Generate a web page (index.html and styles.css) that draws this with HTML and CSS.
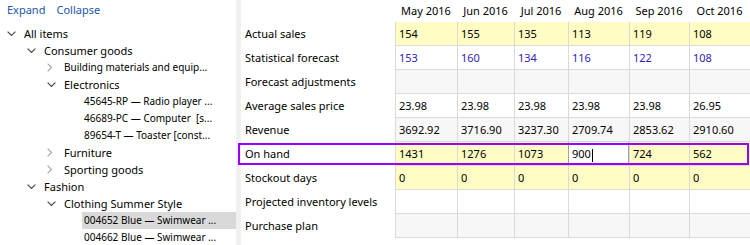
FILE: index.html
```html
<!DOCTYPE html>
<html>
<head>
    <title>Demand plan</title>
    <link rel="stylesheet" href="styles.css">
</head>
<body>
<div class="app">
    <div class="side">
        <div class="tools"><a href="#">Expand</a><a href="#">Collapse</a></div>
        <div class="tree">
            <div class="node l0"><i class="tw"><svg width="9" height="6" viewBox="0 0 9 6"><path class="dn" d="M0.6 0.6 L4.5 4.5 L8.4 0.6"/></svg></i><span class="txt">All items</span></div>
            <div class="node l1"><i class="tw"><svg width="9" height="6" viewBox="0 0 9 6"><path class="dn" d="M0.6 0.6 L4.5 4.5 L8.4 0.6"/></svg></i><span class="txt">Consumer goods</span></div>
            <div class="node l2"><i class="tw"><svg width="6" height="9" viewBox="0 0 6 9"><path class="rt" d="M0.6 0.6 L4.5 4.5 L0.6 8.4"/></svg></i><span class="txt sm">Building materials and equip...</span></div>
            <div class="node l2"><i class="tw"><svg width="9" height="6" viewBox="0 0 9 6"><path class="dn" d="M0.6 0.6 L4.5 4.5 L8.4 0.6"/></svg></i><span class="txt">Electronics</span></div>
            <div class="node l3"><i class="tw"></i><span class="txt sm">45645-RP — Radio player ...</span></div>
            <div class="node l3"><i class="tw"></i><span class="txt sm">46689-PC — Computer &nbsp;[s...</span></div>
            <div class="node l3"><i class="tw"></i><span class="txt sm">89654-T — Toaster [const...</span></div>
            <div class="node l2"><i class="tw"><svg width="6" height="9" viewBox="0 0 6 9"><path class="rt" d="M0.6 0.6 L4.5 4.5 L0.6 8.4"/></svg></i><span class="txt">Furniture</span></div>
            <div class="node l2"><i class="tw"><svg width="6" height="9" viewBox="0 0 6 9"><path class="rt" d="M0.6 0.6 L4.5 4.5 L0.6 8.4"/></svg></i><span class="txt">Sporting goods</span></div>
            <div class="node l1"><i class="tw"><svg width="9" height="6" viewBox="0 0 9 6"><path class="dn" d="M0.6 0.6 L4.5 4.5 L8.4 0.6"/></svg></i><span class="txt">Fashion</span></div>
            <div class="node l2"><i class="tw"><svg width="9" height="6" viewBox="0 0 9 6"><path class="dn" d="M0.6 0.6 L4.5 4.5 L8.4 0.6"/></svg></i><span class="txt">Clothing Summer Style</span></div>
            <div class="node l3 sel"><i class="tw"></i><span class="txt sm">004652 Blue — Swimwear ...</span></div>
            <div class="node l3"><i class="tw"></i><span class="txt sm">004662 Blue — Swimwear ...</span></div>
        </div>
    </div>
    <div class="split"></div>
    <div class="grid">
        <div class="row head">
            <div class="lbl"></div>
            <div class="c">May 2016</div><div class="c">Jun 2016</div><div class="c">Jul 2016</div>
            <div class="c">Aug 2016</div><div class="c">Sep 2016</div><div class="c">Oct 2016</div>
        </div>
        <div class="row yellow">
            <div class="lbl">Actual sales</div>
            <div class="c">154</div><div class="c">155</div><div class="c">135</div>
            <div class="c">113</div><div class="c">119</div><div class="c">108</div>
        </div>
        <div class="row blue">
            <div class="lbl">Statistical forecast</div>
            <div class="c">153</div><div class="c">160</div><div class="c">134</div>
            <div class="c">116</div><div class="c">122</div><div class="c">108</div>
        </div>
        <div class="row gray">
            <div class="lbl">Forecast adjustments</div>
            <div class="c"></div><div class="c"></div><div class="c"></div>
            <div class="c"></div><div class="c"></div><div class="c"></div>
        </div>
        <div class="row">
            <div class="lbl">Average sales price</div>
            <div class="c">23.98</div><div class="c">23.98</div><div class="c">23.98</div>
            <div class="c">23.98</div><div class="c">23.98</div><div class="c">26.95</div>
        </div>
        <div class="row gray">
            <div class="lbl">Revenue</div>
            <div class="c">3692.92</div><div class="c">3716.90</div><div class="c">3237.30</div>
            <div class="c">2709.74</div><div class="c">2853.62</div><div class="c">2910.60</div>
        </div>
        <div class="row yellow focus">
            <div class="lbl">On hand</div>
            <div class="c">1431</div><div class="c">1276</div><div class="c">1073</div>
            <div class="c edit">900<span class="caret"></span></div><div class="c">724</div><div class="c">562</div>
        </div>
        <div class="row yellow">
            <div class="lbl">Stockout days</div>
            <div class="c">0</div><div class="c">0</div><div class="c">0</div>
            <div class="c">0</div><div class="c">0</div><div class="c">0</div>
        </div>
        <div class="row">
            <div class="lbl">Projected inventory levels</div>
            <div class="c"></div><div class="c"></div><div class="c"></div>
            <div class="c"></div><div class="c"></div><div class="c"></div>
        </div>
        <div class="row gray">
            <div class="lbl">Purchase plan</div>
            <div class="c"></div><div class="c"></div><div class="c"></div>
            <div class="c"></div><div class="c"></div><div class="c"></div>
        </div>
    </div>
</div>
</body>
</html>
```
FILE: styles.css
```css
body {
    margin: 0;
    font-family: "Noto Sans", "Open Sans", sans-serif;
    font-size: 11px;
    color: #000;
    background: #fff;
}
.app {
    display: flex;
    height: 245px;
    overflow: hidden;
}

/* left tree */
.side {
    width: 236px;
    flex: none;
    overflow: hidden;
}
.tools {
    display: flex;
    gap: 11px;
    padding-left: 7px;
    height: 20px;
    line-height: 20px;
    margin-bottom: 5px;
}
.tools a {
    color: #2255aa;
    text-decoration: none;
}
.node {
    display: flex;
    align-items: center;
    height: 17px;
    white-space: nowrap;
}
.node.l0 { padding-left: 4px; }
.node.l1 { padding-left: 24px; }
.node.l2 { padding-left: 44px; }
.node.l3 { padding-left: 64px; }
.tw {
    width: 15px;
    padding-left: 3px;
    flex: none;
    display: flex;
    align-items: center;
}
.tw svg { display: block; }
.dn, .rt {
    fill: none;
    stroke-width: 1.2;
}
.dn { stroke: #4a4a4a; }
.rt { stroke: #a8a8a8; }
.txt {
    flex: 1;
    height: 17px;
    line-height: 17px;
    padding: 0 2px;
}
.txt.sm { font-size: 10px; }
.sel .txt { background: #d9d9d9; }

.split {
    width: 5px;
    flex: none;
    background: #f0f0f0;
}

/* right grid */
.grid {
    flex: 1;
}
.row {
    display: flex;
    height: 24px;
    position: relative;
}
.row.head { height: 22px; }
.lbl {
    width: 154px;
    flex: none;
    box-sizing: border-box;
    padding-left: 4px;
    line-height: 23px;
    white-space: nowrap;
    background: #fff;
}
.c {
    flex: none;
    box-sizing: border-box;
    padding-left: 3px;
    line-height: 23px;
    border-left: 1px solid #dadada;
    border-bottom: 1px solid #dadada;
    white-space: nowrap;
}
.c:nth-child(2) { width: 62px; }
.c:nth-child(3) { width: 57px; }
.c:nth-child(4) { width: 54px; }
.c:nth-child(5) { width: 61px; }
.c:nth-child(6) { width: 60px; }
.c:nth-child(7) { width: 61px; }
.head .c {
    border: none;
    padding-left: 0;
    text-align: center;
    line-height: 22px;
}
.yellow .c { background: #fffcc4; }
.gray .c { background: #f7f7f7; }
.blue .c { color: #3322bb; }
.focus::after {
    content: "";
    position: absolute;
    left: -3px;
    right: 1px;
    top: 1px;
    bottom: 1px;
    border: 2px solid #9900ff;
    pointer-events: none;
}
.yellow .c.edit {
    background: #fff;
    border-left-color: #a0a0a0;
    box-shadow: inset -1px 0 #a0a0a0;
}
.caret {
    display: inline-block;
    width: 1px;
    height: 13px;
    background: #000;
    vertical-align: middle;
    margin-left: 1px;
}
```
